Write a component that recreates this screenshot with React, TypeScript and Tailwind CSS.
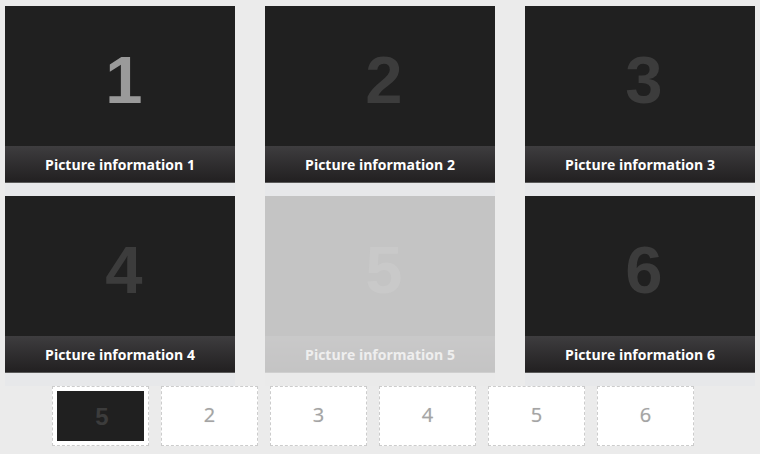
import React from "react";

const tiles = [1, 2, 3, 4, 5, 6];

function Tile({ n }: { n: number }) {
  const faded = n === 5;
  return (
    <div className={`flex flex-col h-[190px] bg-[#e7e8ea] ${faded ? "opacity-[0.19]" : ""}`}>
      <div className="h-[140px] bg-[#202020] flex items-center justify-center pl-[8px] pt-[6px]">
        <span
          className={`text-[67px] font-bold leading-none ${n === 1 ? "text-[#9a9a9a]" : "text-[#3c3c3c]"}`}
          style={{ fontFamily: '"Liberation Sans", Arial, sans-serif' }}
        >
          {n}
        </span>
      </div>
      <div className="h-[37px] border-b border-[#5a5a5a] bg-gradient-to-b from-[#3e3d3f] to-[#222021] flex items-center justify-center">
        <span
          className="text-white text-[14px] font-bold"
          style={{ fontFamily: '"Open Sans", "Noto Sans", sans-serif' }}
        >
          Picture information {n}
        </span>
      </div>
    </div>
  );
}

export default function App() {
  return (
    <div className="w-[760px] h-[454px] bg-[#ebebeb] overflow-hidden">
      <div className="pl-[5px] pt-[6px] grid grid-cols-[230px_230px_230px] gap-x-[30px]">
        {tiles.map((n) => (
          <Tile key={n} n={n} />
        ))}
      </div>
      <div className="flex gap-[12px] pl-[52px]">
        <div className="w-[97px] h-[60px] border border-dashed border-[#cccccc] bg-white p-[4px]">
          <div className="w-full h-full bg-[#202020] flex items-center justify-center pl-[3px] pt-[2px]">
            <span
              className="text-[24px] font-bold leading-none text-[#3c3c3c]"
              style={{ fontFamily: '"Liberation Sans", Arial, sans-serif' }}
            >
              5
            </span>
          </div>
        </div>
        {[2, 3, 4, 5, 6].map((n) => (
          <div
            key={n}
            className="w-[97px] h-[60px] border border-dashed border-[#cccccc] bg-white flex items-center justify-center"
          >
            <span
              className="text-[20px] leading-none text-[#a4a4a4] -mt-[2px]"
              style={{ fontFamily: '"Open Sans", "Noto Sans", sans-serif', textShadow: "0 0 1px rgba(0,0,0,0.2)" }}
            >
              {n}
            </span>
          </div>
        ))}
      </div>
    </div>
  );
}
